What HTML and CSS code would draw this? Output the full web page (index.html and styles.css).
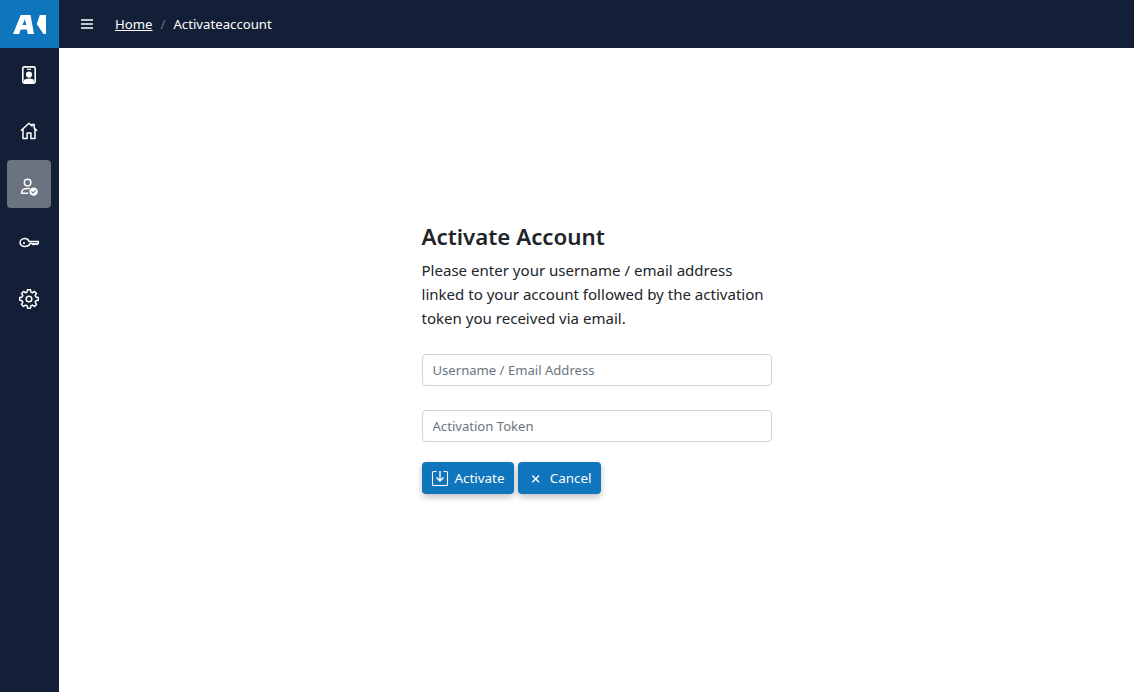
FILE: index.html
```html
<!DOCTYPE html>
<html lang="en">
<head>
<meta charset="utf-8">
<title>Activate Account</title>
<link rel="stylesheet" href="styles.css">
</head>
<body>
<div class="app">
  <aside class="sidebar">
    <a class="logo" href="#" aria-label="Logo">
      <svg width="34" height="20" viewBox="0 -1 34 20"><path fill="#fff" fill-rule="evenodd" d="M7.800 0h9.700L21 19h-6.200l-.9-4.500H7.700L6.200 19H0zM11.700 4.500 9.500 10h4z"/><path fill="#fff" d="M33 0v19h-2.600L23.800 9 26.800 0z"/></svg>
    </a>
    <nav class="nav">
      <a class="nav-item" href="#"><svg width="20" height="20" viewBox="0 0 20 20" fill="none" stroke="#fff"><rect x="3.800" y="1.900" width="12.400" height="16.200" rx="1.600" stroke-width="1.600"/><path d="M8 4.300h4" stroke-width="1.200"/><circle cx="10" cy="9.600" r="3.100" fill="#fff" stroke="none"/><path d="M5 18v-2.600c0-1 1.400-2 5-2s5 1 5 2V18z" fill="#fff" stroke="none"/></svg></a>
      <a class="nav-item" href="#"><svg width="20" height="20" viewBox="0 0 20 20" fill="none" stroke="#fff" stroke-width="1.500" stroke-linejoin="round" stroke-linecap="round"><path d="M2.400 9.300 10 2.200l3 2.800V3.600h2.200v3.500l2.400 2.200M4 8.200v9.200h4.100V12h3.800v5.400H16V8.200"/></svg></a>
      <a class="nav-item active" href="#"><svg width="20" height="20" viewBox="0 0 20 20" fill="none" stroke="#fff" stroke-width="1.500" stroke-linecap="round"><circle cx="8.600" cy="5.600" r="3.300"/><path d="M2.600 16.200v-.9c0-2.400 2.800-3.900 6-3.900 .5 0 1 0 1.500.1M2.600 16.200h6.200"/><circle cx="14.600" cy="14.600" r="4.200" fill="#fff" stroke="none"/><path d="m12.800 14.700 1.300 1.300 2.300-2.500" stroke="#6b7280" stroke-width="1.100"/></svg></a>
      <a class="nav-item" href="#"><svg width="20" height="20" viewBox="0 0 20 20" fill="none" stroke="#fff" stroke-width="1.500" stroke-linejoin="round"><path d="M5.800 5.600c2 0 3.600 1.100 4.200 2.800h9.300v1.800l-1.300 1.200-1.100-.9-1.100.9-1-.9-1 .9-1-.9-1.800 0c-.6 1.600-2.200 2.700-4.200 2.700A4.400 4.400 0 0 1 1 10c0-2.400 2-4.400 4.800-4.400z"/><circle cx="5" cy="10" r="1.100" fill="#fff" stroke="none"/></svg></a>
      <a class="nav-item" href="#"><svg width="20" height="20" viewBox="0 0 24 24" fill="none" stroke="#fff" stroke-width="1.800" stroke-linejoin="round"><path d="M10.300 2.300h3.400l.6 2.900 1.800.8 2.500-1.600 2.400 2.400-1.600 2.500.8 1.800 2.900.6v3.400l-2.900.6-.8 1.800 1.600 2.500-2.400 2.400-2.500-1.600-1.800.8-.6 2.900h-3.400l-.6-2.900-1.800-.8-2.500 1.600-2.400-2.400 1.600-2.500-.8-1.800-2.900-.6v-3.400l2.900-.6.8-1.800-1.600-2.500 2.400-2.400 2.500 1.600 1.800-.8z" transform="translate(0 -1.500)"/><circle cx="12" cy="12" r="3.400"/></svg></a>
    </nav>
  </aside>
  <div class="content">
    <header class="topbar">
      <button class="menu-btn" type="button" aria-label="Menu"><svg width="12" height="10" viewBox="0 0 12 10" stroke="#fff" stroke-width="1.500"><path d="M0 1h12M0 5h12M0 9h12"/></svg></button>
      <ol class="crumbs">
        <li><a href="#">Home</a></li>
        <li class="sep">/</li>
        <li>Activateaccount</li>
      </ol>
    </header>
    <main class="main">
      <form class="form">
        <h1 class="title">Activate Account</h1>
        <p class="intro">Please enter your username / email address linked to your account followed by the activation token you received via email.</p>
        <input class="field" type="text" placeholder="Username / Email Address">
        <input class="field" type="text" placeholder="Activation Token">
        <div class="actions">
          <button class="btn btn-activate" type="button"><svg width="18" height="18" viewBox="0 0 18 18" fill="none" stroke="#fff" stroke-width="1.100"><path d="M5.500 2.500H2.500a1 1 0 0 0-1 1v12a1 1 0 0 0 1 1h13a1 1 0 0 0 1-1v-12a1 1 0 0 0-1-1h-3"/><path d="M9 2v10M5.500 8.500 9 12l3.500-3.500" stroke-width="1.400"/></svg>Activate</button>
          <button class="btn btn-cancel" type="button"><svg width="18" height="18" viewBox="0 0 18 18" fill="none" stroke="#fff" stroke-width="1.400"><path d="m5.500 6.500 7 7M12.500 6.500l-7 7"/></svg>Cancel</button>
        </div>
      </form>
    </main>
  </div>
</div>
</body>
</html>
```
FILE: styles.css
```css
* { box-sizing: border-box; }
html, body { margin: 0; height: 100%; }
body { font-family: "Noto Sans", "Open Sans", sans-serif; color: #212529; background: #fff; overflow: hidden; }
.app { display: flex; height: 692px; }
.sidebar { width: 59px; flex: none; background: #131f37; display: flex; flex-direction: column; }
.logo { height: 48px; background: #0f75bc; display: flex; align-items: center; justify-content: center; }
.nav { display: flex; flex-direction: column; gap: 8px; padding: 0 8px 0 7px; }
.nav-item { height: 48px; padding-top: 6px; border-radius: 4px; display: flex; align-items: center; justify-content: center; }
.nav-item.active { background: #6b7280; }
.content { flex: 1; display: flex; flex-direction: column; min-width: 0; }
.topbar { height: 48px; background: #131f37; display: flex; align-items: center; padding-left: 22px; color: #fff; font-size: 13.200px; }
.menu-btn { width: 12px; height: 10px; padding: 0; border: 0; background: none; display: flex; margin-right: 22px; }
.crumbs { list-style: none; margin: 0; padding: 0; display: flex; gap: 8px; }
.crumbs a { color: #fff; }
.sep { color: #6c757d; }
.main { flex: 1; display: flex; justify-content: center; padding-top: 174px; }
.form { width: 350px; }
.title { margin: 0 0 7px; font-size: 22.300px; line-height: 29px; font-weight: 600; color: #212529; }
.intro { margin: 0 0 24px; font-size: 15.050px; line-height: 24px; }
.field { display: block; width: 100%; height: 32px; margin-bottom: 24px; padding: 0 10px; border: 1px solid #ced4da; border-radius: 4px; font: inherit; font-size: 13.100px; color: #212529; }
.field::placeholder { color: #6c757d; opacity: 1; }
.actions { display: flex; gap: 4px; margin-top: -4px; }
.btn { height: 32px; display: flex; align-items: center; gap: 6px; padding: 0 9px; border: 0; border-radius: 4px; background: #0f75bc; color: #fff; font: inherit; font-size: 13.400px; box-shadow: 0 3px 6px rgba(0,0,0,.25); }
.btn-activate { width: 92px; }
.btn-cancel { width: 83px; }
```
